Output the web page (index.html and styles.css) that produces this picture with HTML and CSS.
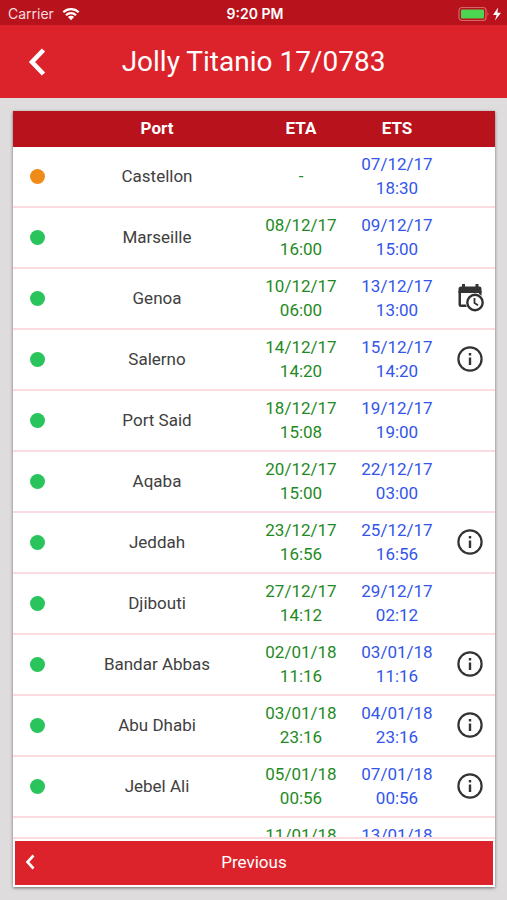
FILE: index.html
```html
<!DOCTYPE html>
<html lang="en">
<head>
<meta charset="utf-8">
<meta name="viewport" content="width=device-width, initial-scale=1">
<title>Jolly Titanio 17/0783</title>
<link rel="stylesheet" href="styles.css">
</head>
<body>
<svg width="0" height="0" class="sprite" aria-hidden="true">
  <symbol id="info" viewBox="0 0 26 26">
    <circle cx="13" cy="13" r="11.6" fill="none" stroke="currentColor" stroke-width="2.2"/>
    <path d="M11.8 7h2.4v2.4h-2.4zM11.8 11.6h2.4v7.4h-2.4z" fill="currentColor"/>
  </symbol>
  <symbol id="schedule" viewBox="0 0 28 30">
    <path d="M5 3.5h18.500a2 2 0 0 1 2 2V24H5a2.500 2.500 0 0 1-2.500-2.500V6A2.500 2.500 0 0 1 5 3.500z" fill="currentColor"/>
    <path d="M6 1h3v4H6zM19.500 1h3v4h-3z" fill="currentColor"/>
    <path d="M5 10h18v11.500H5z" fill="#fff"/>
    <circle cx="19" cy="19.500" r="9.400" fill="#fff"/>
    <path d="M2.500 8h23v2h-23z" fill="currentColor"/>
    <circle cx="19" cy="19.500" r="7.700" fill="#fff" stroke="currentColor" stroke-width="2.400"/>
    <path d="M18.500 15v5l3.500 2.200" fill="none" stroke="currentColor" stroke-width="1.800"/>
  </symbol>
</svg>
<div class="status">
  <div class="carrier">
    <span>Carrier</span>
    <svg class="wifi" viewBox="0 0 18 14" aria-hidden="true">
      <path d="M1.300 5.200a11 11 0 0 1 15.400 0M4 8.200a7.100 7.100 0 0 1 10 0" fill="none" stroke="#fff" stroke-width="2.200"/>
      <path d="M5.900 10a4.400 4.400 0 0 1 6.200 0L9 13.200z" fill="#fff"/>
    </svg>
  </div>
  <time class="clock">9:20 PM</time>
  <div class="power">
    <svg class="battery" viewBox="0 0 44 16" aria-hidden="true">
      <rect x="1" y="1.500" width="27" height="13" rx="3" fill="none" stroke="#d9656a" stroke-width="1.200"/>
      <rect x="3" y="3.500" width="23" height="9" rx="1" fill="#4cd551"/>
      <path d="M29.500 6q2 2 0 4z" fill="#d9656a"/>
      <path d="M40 1.500L35 9h3.600L37 14.500 43 6.800h-3.600z" fill="#fff"/>
    </svg>
  </div>
</div>
<header class="bar">
  <button class="back" type="button" aria-label="Back">
    <svg viewBox="0 0 18 28" aria-hidden="true"><path d="M15.500 2L4 14l11.500 12" fill="none" stroke="#fff" stroke-width="4.600"/></svg>
  </button>
  <h1>Jolly Titanio 17/0783</h1>
</header>
<main class="page">
  <section class="card">
    <div class="scroll">
      <table>
        <thead>
          <tr><th class="state"></th><th>Port</th><th class="date">ETA</th><th class="date">ETS</th><th class="more"></th></tr>
        </thead>
        <tbody>
          <tr><td><i class="dot pending"></i></td><td>Castellon</td><td class="eta">-</td><td class="ets">07/12/17<br>18:30</td><td></td></tr>
          <tr><td><i class="dot"></i></td><td>Marseille</td><td class="eta">08/12/17<br>16:00</td><td class="ets">09/12/17<br>15:00</td><td></td></tr>
          <tr><td><i class="dot"></i></td><td>Genoa</td><td class="eta">10/12/17<br>06:00</td><td class="ets">13/12/17<br>13:00</td><td><button class="action" type="button" aria-label="Schedule for Genoa"><svg class="schedule"><use href="#schedule"/></svg></button></td></tr>
          <tr><td><i class="dot"></i></td><td>Salerno</td><td class="eta">14/12/17<br>14:20</td><td class="ets">15/12/17<br>14:20</td><td><button class="action" type="button" aria-label="Salerno details"><svg class="info"><use href="#info"/></svg></button></td></tr>
          <tr><td><i class="dot"></i></td><td>Port Said</td><td class="eta">18/12/17<br>15:08</td><td class="ets">19/12/17<br>19:00</td><td></td></tr>
          <tr><td><i class="dot"></i></td><td>Aqaba</td><td class="eta">20/12/17<br>15:00</td><td class="ets">22/12/17<br>03:00</td><td></td></tr>
          <tr><td><i class="dot"></i></td><td>Jeddah</td><td class="eta">23/12/17<br>16:56</td><td class="ets">25/12/17<br>16:56</td><td><button class="action" type="button" aria-label="Jeddah details"><svg class="info"><use href="#info"/></svg></button></td></tr>
          <tr><td><i class="dot"></i></td><td>Djibouti</td><td class="eta">27/12/17<br>14:12</td><td class="ets">29/12/17<br>02:12</td><td></td></tr>
          <tr><td><i class="dot"></i></td><td>Bandar Abbas</td><td class="eta">02/01/18<br>11:16</td><td class="ets">03/01/18<br>11:16</td><td><button class="action" type="button" aria-label="Bandar Abbas details"><svg class="info"><use href="#info"/></svg></button></td></tr>
          <tr><td><i class="dot"></i></td><td>Abu Dhabi</td><td class="eta">03/01/18<br>23:16</td><td class="ets">04/01/18<br>23:16</td><td><button class="action" type="button" aria-label="Abu Dhabi details"><svg class="info"><use href="#info"/></svg></button></td></tr>
          <tr><td><i class="dot"></i></td><td>Jebel Ali</td><td class="eta">05/01/18<br>00:56</td><td class="ets">07/01/18<br>00:56</td><td><button class="action" type="button" aria-label="Jebel Ali details"><svg class="info"><use href="#info"/></svg></button></td></tr>
          <tr><td></td><td></td><td class="eta">11/01/18</td><td class="ets">13/01/18</td><td></td></tr>
        </tbody>
      </table>
    </div>
    <div class="footer">
      <button class="previous" type="button">
        <svg viewBox="0 0 10 16" aria-hidden="true"><path d="M8.500 1.500L2.500 8l6 6.500" fill="none" stroke="#fff" stroke-width="2.600"/></svg>
        <span>Previous</span>
      </button>
    </div>
  </section>
</main>
</body>
</html>
```
FILE: styles.css
```css
* {
  box-sizing: border-box;
}

body {
  margin: 0;
  height: 100vh;
  display: flex;
  flex-direction: column;
  overflow: hidden;
  background: #dedcdd;
  color: #404040;
  font-family: Roboto, "Liberation Sans", sans-serif;
  font-size: 17px;
}

button {
  margin: 0;
  padding: 0;
  border: 0;
  background: none;
  color: inherit;
  font: inherit;
}

svg {
  display: block;
}

.sprite {
  position: absolute;
}

.status {
  display: grid;
  grid-template-columns: 1fr auto 1fr;
  align-items: center;
  padding: 2px 5px 0 8px;
  height: 25px;
  background: #b8131d;
  color: #fff;
  font-family: Inter, "Liberation Sans", sans-serif;
  font-size: 14px;
}

.carrier {
  display: flex;
  align-items: center;
  gap: 8px;
  color: #f8dcdd;
}

.wifi {
  width: 18px;
  height: 14px;
}

.clock {
  font-weight: 600;
}

.power {
  display: flex;
  justify-content: flex-end;
}

.battery {
  width: 44px;
  height: 16px;
}

.bar {
  display: grid;
  grid-template-columns: 74px 1fr 74px;
  align-items: center;
  height: 73px;
  background: #dc232b;
  color: #fff;
}

.back {
  display: flex;
  justify-content: center;
}

.back svg {
  width: 18px;
  height: 28px;
}

h1 {
  margin: 0;
  font-size: 28px;
  font-weight: 400;
  text-align: center;
}

.page {
  flex: 1;
  min-height: 0;
  padding: 13px 12px 13px 13px;
  display: flex;
}

.card {
  flex: 1;
  display: flex;
  flex-direction: column;
  background: #fff;
  box-shadow: 0 1px 3px rgba(0, 0, 0, 0.5);
}

.scroll {
  flex: 1;
  min-height: 0;
  overflow: hidden;
}

table {
  width: 100%;
  table-layout: fixed;
  border-collapse: separate;
  border-spacing: 0;
  text-align: center;
}

th {
  height: 36px;
  padding: 0 0 2px;
  background: #b8131d;
  color: #fff;
  font-weight: 700;
}

.state {
  width: 48px;
}

.date {
  width: 96px;
}

.more {
  width: 50px;
}

td {
  height: 61px;
  padding: 5px 0 6px;
  border-bottom: 2px solid #fbdbe0;
  line-height: 24px;
}

.eta {
  color: #1f8a24;
}

.ets {
  color: #3355ea;
}

tr:last-child td {
  vertical-align: top;
}

.dot {
  display: block;
  width: 15px;
  height: 15px;
  margin: 0 auto;
  border-radius: 50%;
  background: #2ac45c;
}

.pending {
  background: #ee8c17;
}

.action {
  display: block;
  margin: 0 auto;
  color: #333;
}

.info {
  width: 26px;
  height: 26px;
}

.schedule {
  width: 28px;
  height: 30px;
}

.footer {
  padding: 2px;
  border-top: 2px solid #fbdbe0;
}

.previous {
  display: grid;
  grid-template-columns: 30px 1fr 30px;
  align-items: center;
  width: 100%;
  height: 44px;
  padding-bottom: 2px;
  background: #dc232b;
  color: #fff;
}

.previous svg {
  width: 10px;
  height: 16px;
  justify-self: center;
}
```
